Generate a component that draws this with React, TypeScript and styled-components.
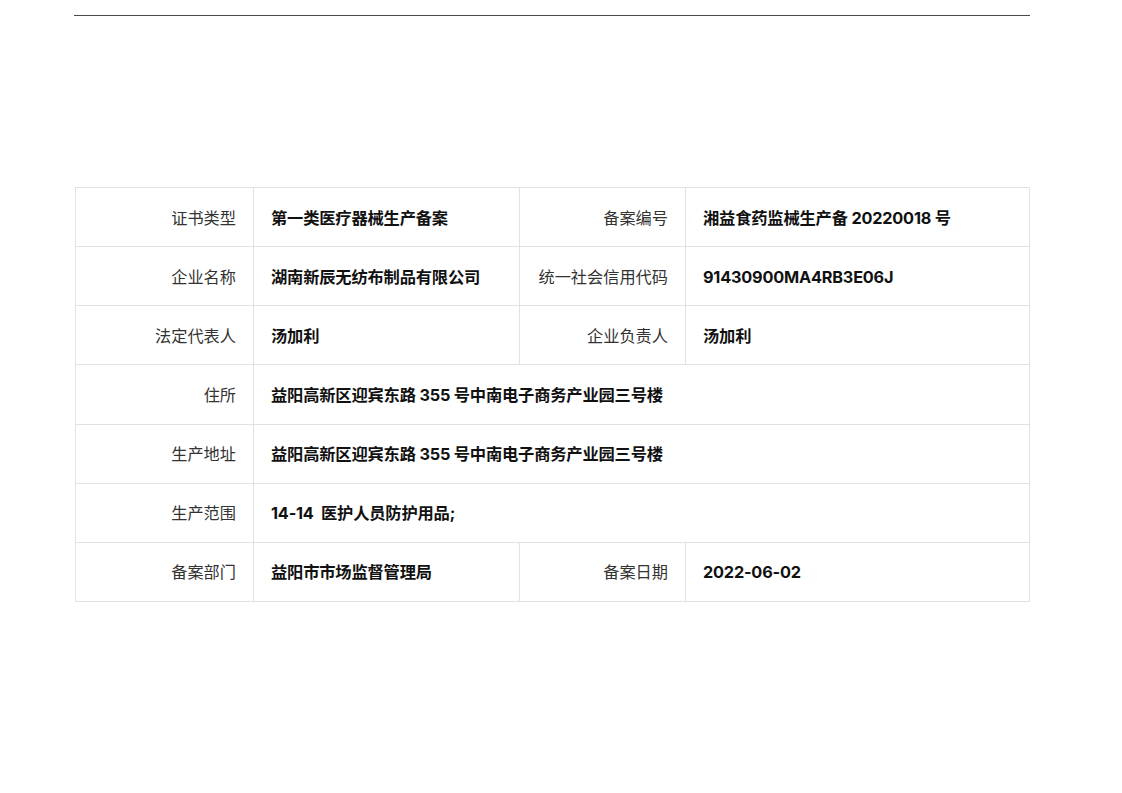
import React from "react";
import styled, { createGlobalStyle } from "styled-components";

const Global = createGlobalStyle`
  html, body { margin: 0; padding: 0; background: #ffffff; }
  body { font-family: "Open Sans", "Noto Sans CJK SC", sans-serif; color: #1a1a1a; }
`;

const Page = styled.div`
  width: 1122px;
  height: 793px;
  padding: 15px 0 0 74px;
  box-sizing: border-box;
  display: flex;
  flex-direction: column;
`;

const Rule = styled.div`
  width: 956px;
  height: 0;
  border-top: 1.5px solid #4a4a4a;
`;

const Table = styled.table`
  margin-top: 171px;
  margin-left: 1px;
  width: 954px;
  border-collapse: collapse;
  table-layout: fixed;
`;

const Col = styled.col<{ $w: number }>`
  width: ${(p) => p.$w}px;
`;

const Row = styled.tr`
  height: 59.15px;
`;

const Cell = styled.td<{ $label?: boolean }>`
  border: 1px solid #e2e2e2;
  padding: 1px 17px 0;
  font-size: ${(p) => (p.$label ? "16.2px" : "16.3px")};
  letter-spacing: ${(p) => (p.$label ? "0" : "-0.2px")};
  line-height: 20px;
  text-align: ${(p) => (p.$label ? "right" : "left")};
  font-weight: ${(p) => (p.$label ? 400 : 700)};
  color: ${(p) => (p.$label ? "#333333" : "#111111")};
  font-family: ${(p) =>
    p.$label
      ? `"Open Sans", "Noto Sans CJK SC", sans-serif`
      : `Inter, "Noto Sans CJK SC", sans-serif`};
  white-space: nowrap;
  vertical-align: middle;
`;

type Pair = [string, string];
const rows: Array<Pair[]> = [
  [["证书类型", "第一类医疗器械生产备案"], ["备案编号", "湘益食药监械生产备 20220018 号"]],
  [["企业名称", "湖南新辰无纺布制品有限公司"], ["统一社会信用代码", "91430900MA4RB3E06J"]],
  [["法定代表人", "汤加利"], ["企业负责人", "汤加利"]],
  [["住所", "益阳高新区迎宾东路 355 号中南电子商务产业园三号楼"]],
  [["生产地址", "益阳高新区迎宾东路 355 号中南电子商务产业园三号楼"]],
  [["生产范围", "14-14\u00a0 医护人员防护用品;"]],
  [["备案部门", "益阳市市场监督管理局"], ["备案日期", "2022-06-02"]],
];

const widths = [178, 266, 166, 344];

export default function App() {
  return (
    <>
      <Global />
      <Page>
        <Rule />
        <Table>
          <colgroup>
            {widths.map((w, i) => (
              <Col key={i} $w={w} />
            ))}
          </colgroup>
          <tbody>
            {rows.map((r, i) => (
              <Row key={i}>
                {r.map(([l, v], j) => (
                  <React.Fragment key={j}>
                    <Cell $label>{l}</Cell>
                    <Cell colSpan={r.length === 1 ? 3 : 1}>{v}</Cell>
                  </React.Fragment>
                ))}
              </Row>
            ))}
          </tbody>
        </Table>
      </Page>
    </>
  );
}
